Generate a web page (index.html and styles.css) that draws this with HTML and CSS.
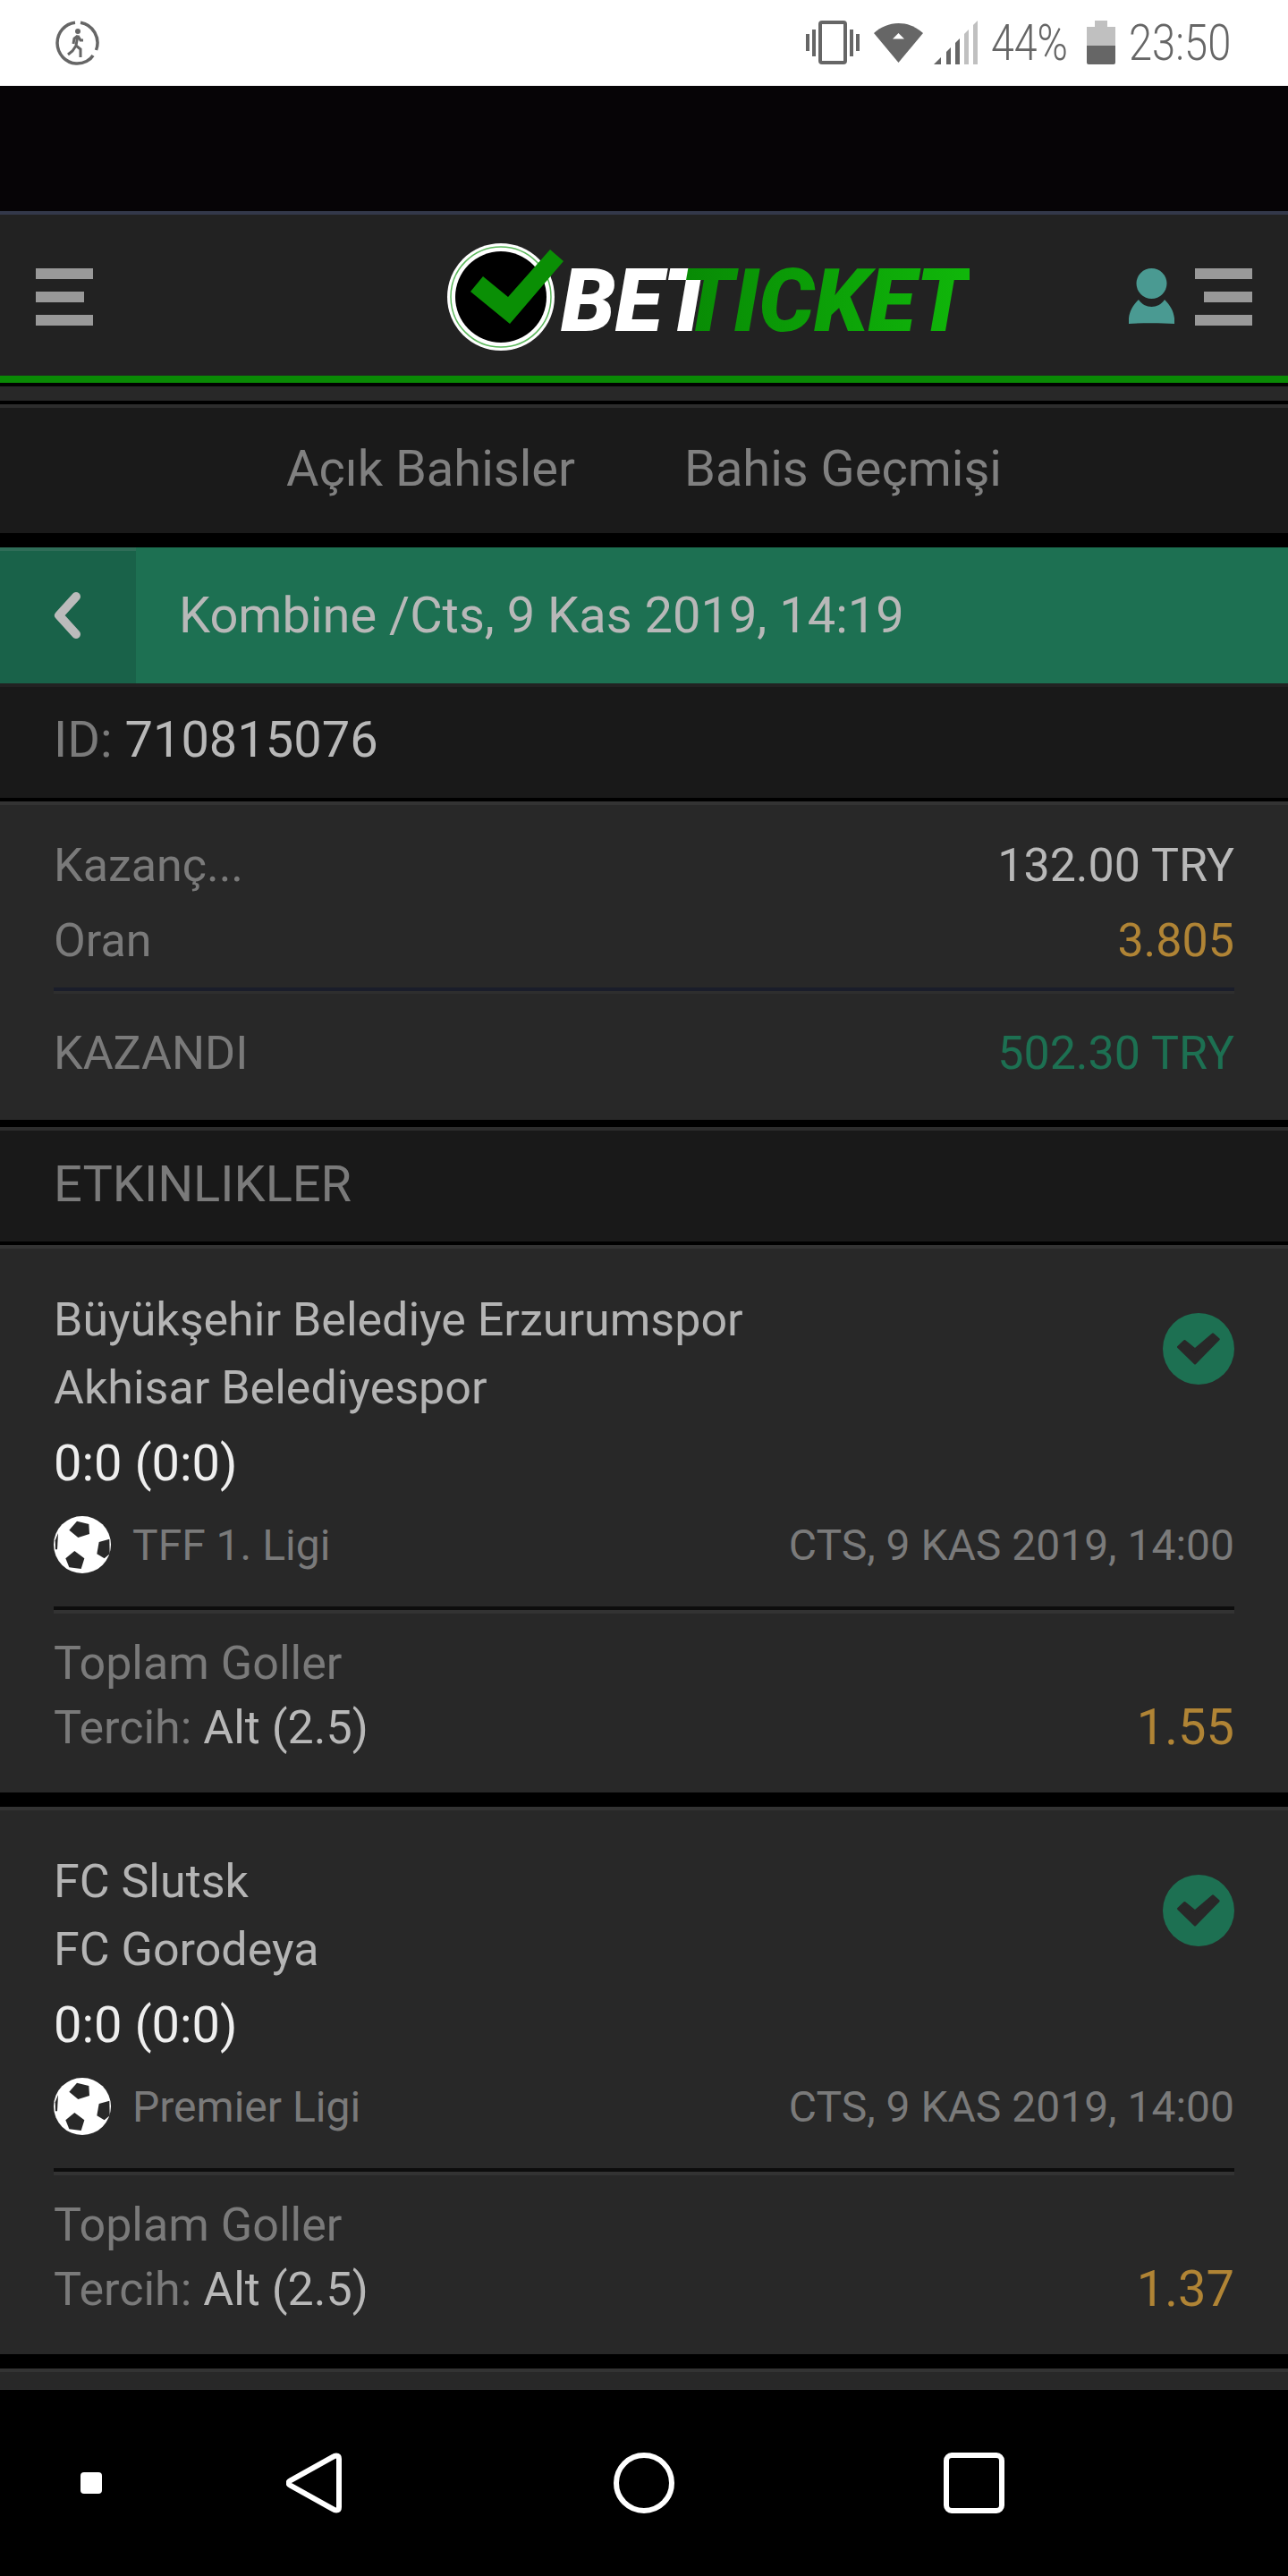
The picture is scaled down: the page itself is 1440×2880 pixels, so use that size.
FILE: index.html
```html
<!DOCTYPE html>
<html lang="tr">
<head>
<meta charset="utf-8">
<title>Beticket</title>
<link rel="stylesheet" href="styles.css">
</head>
<body>
<div class="page">
  <div class="status">
    <svg class="ic-run" viewBox="0 0 52 52" width="52" height="52">
      <path class="run-ring" d="M24 3.200A22.500 23 0 0 0 25 49C34 49.500 41 45 44 40M47.500 34A22.500 23 0 0 0 30 3.200"/>
      <circle class="run-head" cx="27" cy="13" r="3"/>
      <path class="run-body" d="M27 17.500L25 29L21 35L16 39M25 29L30 33L30 42M27 18L23 21L22 27M27 18L30 23L33 23"/>
    </svg>
    <div class="status-right">
      <svg class="ic-vib" viewBox="0 0 60 49" width="60" height="49">
        <rect class="st-fill" x="0" y="15" width="4" height="19"/>
        <rect class="st-fill" x="7" y="10" width="4" height="30"/>
        <rect class="st-line" x="16" y="2" width="28" height="45" rx="2"/>
        <rect class="st-fill" x="49" y="10" width="4" height="30"/>
        <rect class="st-fill" x="56" y="15" width="4" height="19"/>
      </svg>
      <svg class="ic-wifi" viewBox="0 0 55 44" width="55" height="44">
        <path class="st-fill" d="M0 11C8 4 17 0 27.500 0C38 0 47 4 55 11L27.500 44Z"/>
        <polygon class="st-white" points="27.500,11 34,17.500 21,17.500"/>
      </svg>
      <svg class="ic-signal" viewBox="0 0 50 49" width="50" height="49">
        <polygon class="st-fill" points="0,49 8,41 8,49"/>
        <polygon class="st-fill" points="14,35 19,30 19,49 14,49"/>
        <polygon class="st-fill" points="24,25 29,20 29,49 24,49"/>
        <polygon class="st-pale" points="34,15 39,10 39,49 34,49"/>
        <polygon class="st-pale" points="44,5 49,0 49,49 44,49"/>
      </svg>
      <span class="st-pct">44%</span>
      <svg class="ic-batt" viewBox="0 0 32 49" width="32" height="49">
        <path class="st-pale" d="M9 0H23V7H32V28H0V7H9Z"/>
        <path class="st-fill" d="M0 28H32V47Q32 49 30 49H2Q0 49 0 47Z"/>
      </svg>
      <span class="st-time">23:50</span>
    </div>
  </div>

  <div class="topgap"></div>

  <header class="header">
    <div class="menu menu-left"><i></i><i></i><i></i></div>
    <div class="logo">
      <svg class="logo-mark" viewBox="0 0 132 120" width="132" height="120">
        <ellipse class="mark-white" cx="60" cy="60" rx="60" ry="60"/>
        <ellipse class="mark-ring" cx="60" cy="60" rx="56" ry="56"/>
        <ellipse class="mark-black" cx="60" cy="60" rx="51" ry="51"/>
        <polygon class="mark-check" points="115,7 130,20 70,90 26,54 40,37 68,60"/>
      </svg>
      <div class="logo-word"><span class="lw-white">BE</span><span class="lw-white lw-t">T</span><span class="lw-green">TICKET</span></div>
    </div>
    <div class="header-right">
      <svg viewBox="0 0 51 64" width="51" height="64">
        <ellipse class="person" cx="25.500" cy="17" rx="17" ry="17"/>
        <path class="person" d="M0 62C-1 50 4 42 11 35C14 40 20 43 25.500 43C31 43 37 40 40 35C47 42 52 50 51 62C36 61 15 61 0 62Z"/>
      </svg>
      <div class="menu menu-right"><i></i><i></i><i></i></div>
    </div>
  </header>
  <div class="header-line"></div>
  <div class="subbar"></div>

  <nav class="tabs">
    <a class="tab">Açık Bahisler</a>
    <a class="tab">Bahis Geçmişi</a>
  </nav>

  <div class="titlebar">
    <div class="back">
      <svg viewBox="0 0 40 56" width="40" height="56"><polyline class="chev" points="31,7 12,28 31,49"/></svg>
    </div>
    <div class="title">Kombine /Cts, 9 Kas 2019, 14:19</div>
  </div>

  <div class="idbar"><span class="dim">ID:</span> <span class="light">710815076</span></div>

  <section class="summary">
    <div class="sum-row"><span class="dim">Kazanç...</span><span class="light">132.00 TRY</span></div>
    <div class="sum-row"><span class="dim">Oran</span><span class="gold">3.805</span></div>
    <div class="sum-rule"></div>
    <div class="sum-row r3"><span class="dim">KAZANDI</span><span class="green">502.30 TRY</span></div>
  </section>

  <div class="sect">ETKINLIKLER</div>

  <article class="card">
    <div class="match">
      <div class="teams">
        <div class="team">Büyükşehir Belediye Erzurumspor</div>
        <div class="team">Akhisar Belediyespor</div>
        <div class="score">0:0 (0:0)</div>
      </div>
      <svg class="tick" viewBox="0 0 80 80" width="80" height="80"><circle class="tick-bg" cx="40" cy="40" r="40"/><polygon class="tick-mark" points="17.500,38 24.300,31.500 36,40.800 56,23.800 62.200,29.300 36,56"/></svg>
    </div>
    <div class="league">
      <svg class="ball" viewBox="0 0 192 192" width="64" height="64"><circle class="ball-bg" cx="96" cy="96" r="96"/><polygon class="ball-p" points="52,47 78,17 118,27 120,60 82,72"/><polygon class="ball-p" points="152,87 187,77 188,127 170,142 145,127"/><polygon class="ball-p" points="40,142 70,117 103,142 92,177 52,172"/><polygon class="ball-p" points="15,57 5,82 6,112 12,112"/></svg>
      <span class="lg-name">TFF 1. Ligi</span>
      <span class="lg-date">CTS, 9 KAS 2019, 14:00</span>
    </div>
    <div class="card-rule"></div>
    <div class="market">
      <div>
        <div class="mk-name">Toplam Goller</div>
        <div class="mk-pick">Tercih: <span class="light">Alt (2.5)</span></div>
      </div>
      <div class="odds">1.55</div>
    </div>
  </article>

  <article class="card">
    <div class="match">
      <div class="teams">
        <div class="team">FC Slutsk</div>
        <div class="team">FC Gorodeya</div>
        <div class="score">0:0 (0:0)</div>
      </div>
      <svg class="tick" viewBox="0 0 80 80" width="80" height="80"><circle class="tick-bg" cx="40" cy="40" r="40"/><polygon class="tick-mark" points="17.500,38 24.300,31.500 36,40.800 56,23.800 62.200,29.300 36,56"/></svg>
    </div>
    <div class="league">
      <svg class="ball" viewBox="0 0 192 192" width="64" height="64"><circle class="ball-bg" cx="96" cy="96" r="96"/><polygon class="ball-p" points="52,47 78,17 118,27 120,60 82,72"/><polygon class="ball-p" points="152,87 187,77 188,127 170,142 145,127"/><polygon class="ball-p" points="40,142 70,117 103,142 92,177 52,172"/><polygon class="ball-p" points="15,57 5,82 6,112 12,112"/></svg>
      <span class="lg-name">Premier Ligi</span>
      <span class="lg-date">CTS, 9 KAS 2019, 14:00</span>
    </div>
    <div class="card-rule"></div>
    <div class="market">
      <div>
        <div class="mk-name">Toplam Goller</div>
        <div class="mk-pick">Tercih: <span class="light">Alt (2.5)</span></div>
      </div>
      <div class="odds">1.37</div>
    </div>
  </article>

  <div class="card-next"></div>

  <div class="navbar">
    <div class="nav-dot"></div>
    <svg class="nav-back" viewBox="0 0 62 68" width="62" height="68"><path class="nav-line" d="M56 3.500Q59 3.500 59 7V61Q59 64.500 56 64.500Q54 64.500 52 63L5 37Q0 34 5 31L52 5Q54 3.500 56 3.500Z"/></svg>
    <svg class="nav-home" viewBox="0 0 68 68" width="68" height="68"><circle class="nav-line" cx="34" cy="34" r="31"/></svg>
    <svg class="nav-rec" viewBox="0 0 68 68" width="68" height="68"><rect class="nav-line" x="3" y="3" width="62" height="62" rx="6"/></svg>
  </div>
</div>
</body>
</html>
```
FILE: styles.css
```css
* { box-sizing: border-box; }
html, body { margin: 0; padding: 0; background: #000; }
body { font-family: Roboto, "Liberation Sans", sans-serif; }
svg { display: block; flex: none; }
.page { width: 1440px; height: 2880px; overflow: hidden; display: flex; flex-direction: column; }

/* status bar */
.status { height: 96px; background: #fff; display: flex; align-items: flex-start; justify-content: space-between; padding: 22px 61px 0 60px; }
.status-right { display: flex; align-items: flex-start; padding-top: 1px; }
.ic-wifi { margin: 3px 12px 0 16px; }
.ic-signal { margin-right: 14px; }
.ic-batt { margin-left: 20px; }
.st-pct { width: 87px; font-size: 56px; line-height: 50px; font-weight: 300; color: #666; white-space: nowrap; transform: scaleX(.83); transform-origin: 0 50%; }
.st-time { margin-left: 15px; width: 117px; font-size: 56px; line-height: 50px; font-weight: 300; color: #666; white-space: nowrap; transform: scaleX(.84); transform-origin: 0 50%; }
.st-fill { fill: #666; }
.st-pale { fill: #c0c0c0; }
.st-white { fill: #fff; }
.st-line { fill: none; stroke: #666; stroke-width: 4; }
.run-ring { fill: none; stroke: #666; stroke-width: 3.500; }
.run-head { fill: #666; }
.run-body { fill: none; stroke: #666; stroke-width: 3; }

.topgap { height: 140px; background: #060406; }

/* header */
.header { height: 184px; background: #222; border-top: 4px solid #33384a; display: flex; align-items: center; padding: 4px 40px 0; }
.menu { width: 64px; height: 64px; display: flex; flex-direction: column; justify-content: space-between; }
.menu i { display: block; height: 12px; background: #999; }
.menu-left i:nth-child(2) { width: 54px; }
.menu-right { align-items: flex-end; }
.menu-right i { width: 64px; }
.menu-right i:nth-child(2) { width: 54px; }
.logo { margin-left: 396px; display: flex; align-items: center; }
.logo-mark { margin-right: -5px; position: relative; z-index: 1; }
.mark-white { fill: #fff; }
.mark-ring { fill: none; stroke: #5cb85c; stroke-width: 1.500; }
.mark-black { fill: #000; }
.mark-check { fill: #0a8f05; }
.logo-word { width: 456px; height: 80px; margin-top: 9px; font-size: 98px; line-height: 80px; font-weight: 900; font-style: italic; letter-spacing: -.5px; white-space: nowrap; }
.lw-white { color: #fff; }
.lw-t { letter-spacing: -40px; }
.lw-green { background: linear-gradient(90deg, #088a05, #10b70a); -webkit-background-clip: text; background-clip: text; color: transparent; }
.header-right { margin-left: auto; display: flex; align-items: center; gap: 23px; }
.person { fill: #4a9a92; }
.header-line { height: 8px; background: #0a8a05; }
.subbar { height: 20px; background: #282828; border-top: 4px solid #030303; }

/* tabs */
.tabs { height: 148px; background: #1a1a1a; border-top: 4px solid #000; box-shadow: inset 0 4px 0 #2d2d2d; display: flex; padding-left: 320px; align-items: center; gap: 122px; }
.tab { font-size: 56px; color: #808080; white-space: nowrap; }

/* title */
.titlebar { height: 152px; margin-top: 16px; background: #1d7052; display: flex; }
.back { width: 152px; background: #196249; border-top: 4px solid #2f6d58; display: flex; align-items: center; padding: 0 0 4px 54px; }
.chev { fill: none; stroke: #bbb; stroke-width: 10; stroke-linecap: round; stroke-linejoin: round; }
.title { padding-left: 48px; font-size: 56px; line-height: 153px; color: #b8b8b8; white-space: nowrap; }

.idbar { height: 132px; background: #191919; border-top: 4px solid #222; border-bottom: 4px solid #000; padding-left: 60px; font-size: 56px; line-height: 118px; }
.dim { color: #7a7a7a; }
.light { color: #b8b8b8; }
.gold { color: #b08435; }
.green { color: #1d7052; }

/* summary */
.summary { height: 356px; background: #282828; border-top: 4px solid #333; padding: 26px 60px 0; }
.sum-row { display: flex; justify-content: space-between; font-size: 52px; line-height: 84px; }
.sum-rule { height: 7px; margin-top: 10px; background: #1a1d2a; border-bottom: 3px solid #2e2e2e; }
.r3 { margin-top: 25px; }

.sect { height: 128px; margin: 8px 0 4px; background: #191919; border-top: 4px solid #2d2d2d; padding-left: 60px; font-size: 56px; line-height: 120px; color: #7a7a7a; }

/* cards */
.card { height: 612px; background: #282828; border-top: 4px solid #333; padding: 42px 60px 0; margin-bottom: 16px; }
.match { display: flex; justify-content: space-between; align-items: flex-start; }
.team { font-size: 52px; line-height: 76px; color: #b4b4b4; white-space: nowrap; }
.score { font-size: 56px; line-height: 92px; color: #eee; }
.tick { margin-top: 30px; }
.tick-bg { fill: #1d7052; }
.tick-mark { fill: #282828; stroke: #282828; stroke-width: 3; stroke-linejoin: round; }
.league { display: flex; align-items: center; height: 64px; margin-top: 13px; }
.ball-bg { fill: #fff; }
.ball-p { fill: #282828; }
.lg-name { margin-left: 24px; font-size: 48px; color: #7a7a7a; }
.lg-date { margin-left: auto; font-size: 48px; color: #7a7a7a; }
.card-rule { height: 8px; margin-top: 37px; background: #0d0d0d; border-bottom: 4px solid #333; }
.market { display: flex; justify-content: space-between; align-items: flex-end; margin-top: 20px; }
.mk-name { font-size: 52px; line-height: 72px; color: #7a7a7a; white-space: nowrap; }
.mk-pick { font-size: 52px; line-height: 72px; color: #7a7a7a; white-space: nowrap; }
.odds { font-size: 56px; line-height: 72px; margin-bottom: 1px; color: #b08435; }
.card-next { height: 24px; background: #282828; border-top: 4px solid #333; }

/* nav */
.navbar { flex: 1; background: #000; position: relative; }
.nav-dot { position: absolute; left: 90px; top: 92px; width: 24px; height: 24px; border-radius: 4px; background: #fff; }
.nav-back { position: absolute; left: 320px; top: 70px; }
.nav-home { position: absolute; left: 686px; top: 70px; }
.nav-rec { position: absolute; left: 1055px; top: 70px; }
.nav-line { fill: none; stroke: #fff; stroke-width: 6; }
```
